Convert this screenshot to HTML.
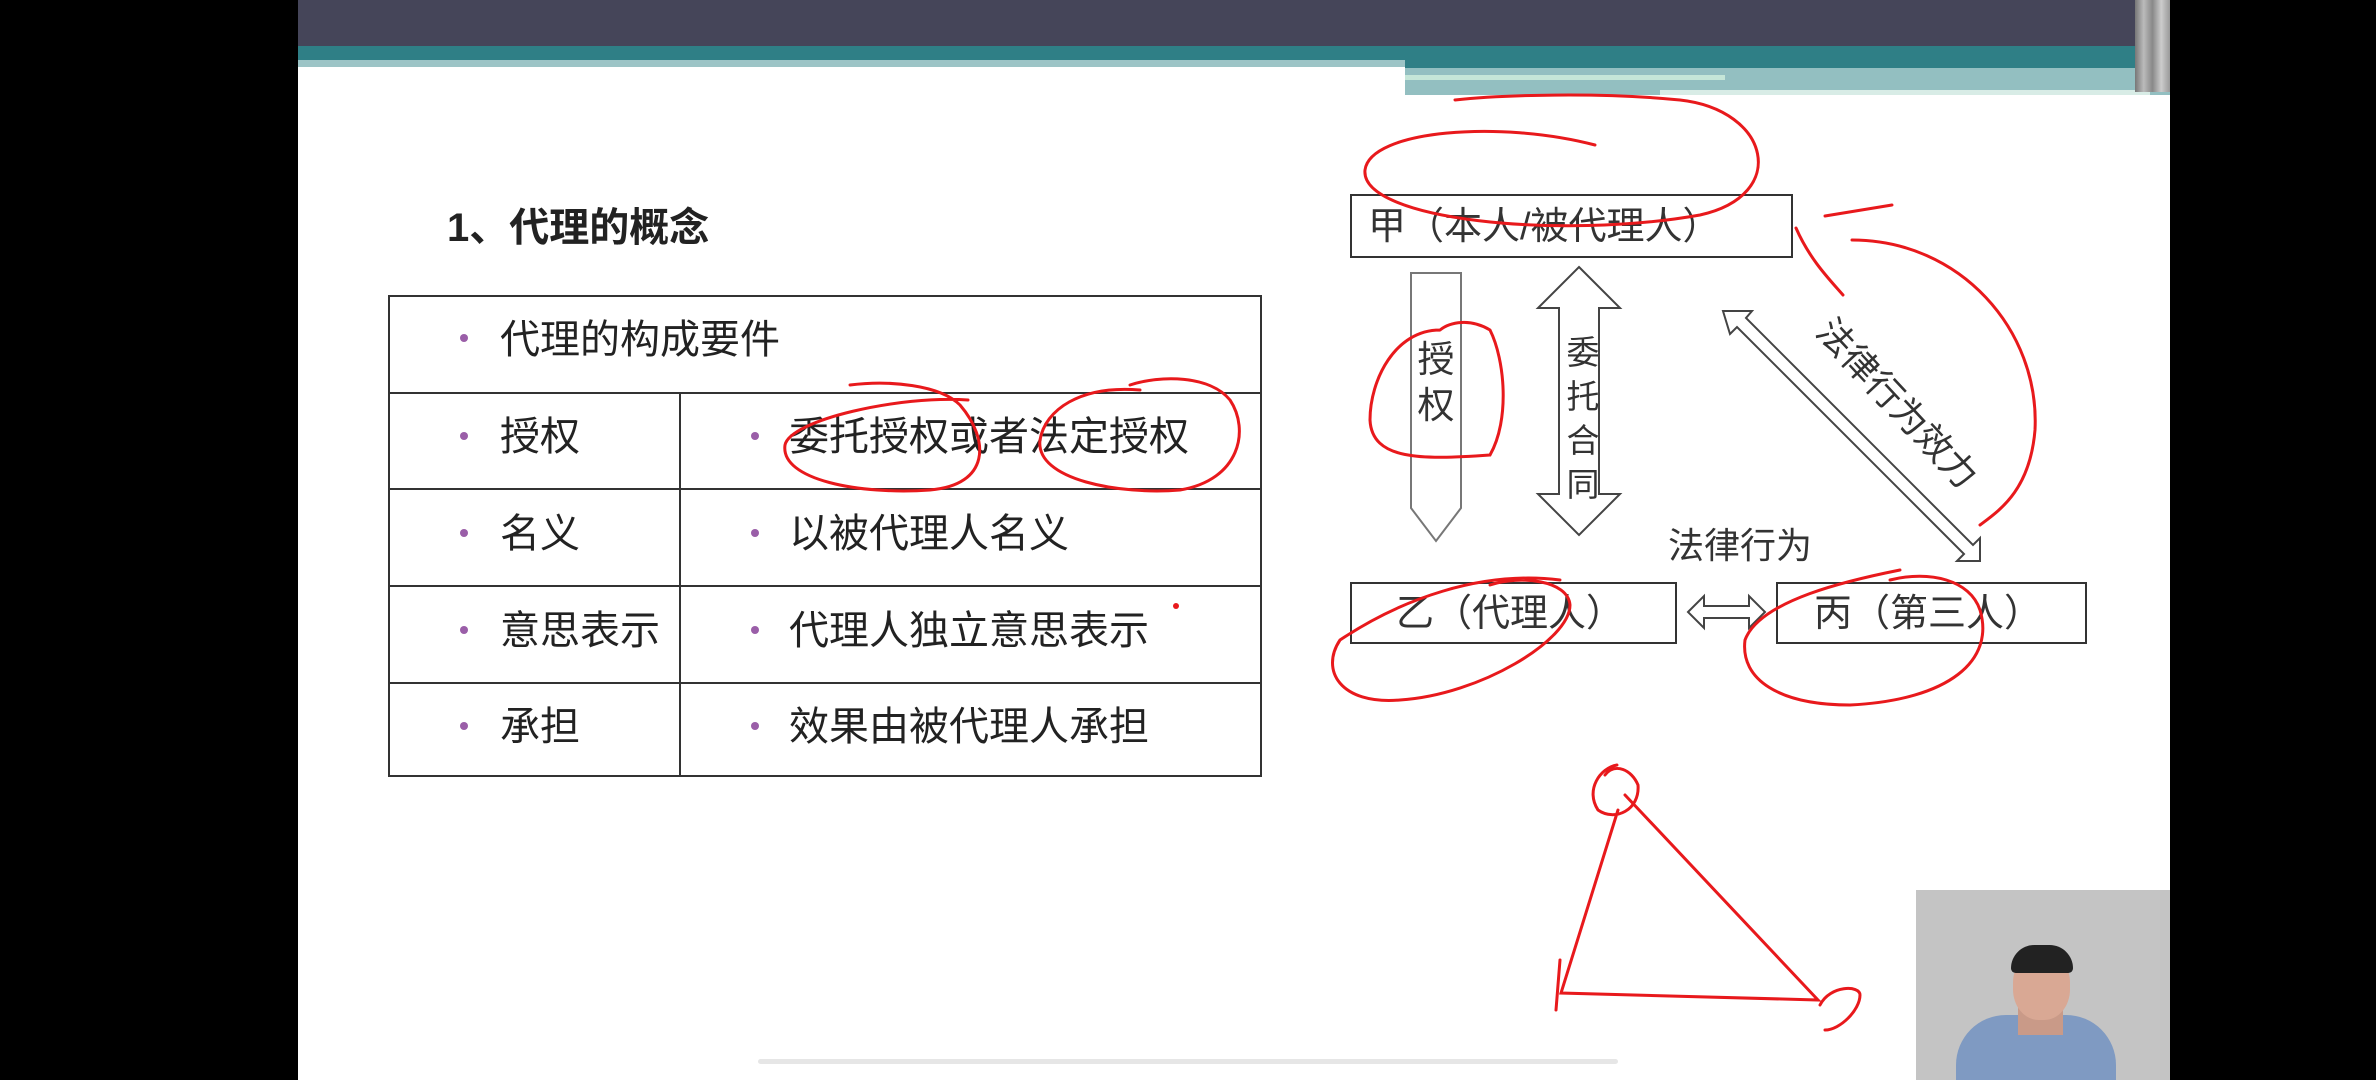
<!DOCTYPE html>
<html><head><meta charset="utf-8"><style>
*{margin:0;padding:0;box-sizing:border-box}
body{width:2376px;height:1080px;background:#000;position:relative;overflow:hidden;font-family:"Liberation Sans","Noto Sans CJK SC",sans-serif;color:#222}
.a{position:absolute}
.slide{left:298px;top:0;width:1872px;height:1080px;background:#fff}
.t{position:absolute;white-space:nowrap}
.cell{font-size:40px;line-height:40px}
.dot{position:absolute;width:8px;height:8px;border-radius:50%;background:#9a5ea8}
.box{position:absolute;border:2px solid #333;background:#fff;font-size:38px;line-height:40px;color:#333;white-space:nowrap}
</style></head><body>
<div class="a slide"></div>
<div class="a" style="left:298px;top:0;width:1872px;height:46px;background:#454559"></div>
<div class="a" style="left:298px;top:46px;width:1872px;height:14px;background:#2f7f86"></div>
<div class="a" style="left:298px;top:60px;width:1107px;height:7px;background:#9cc4c6"></div>
<div class="a" style="left:1405px;top:60px;width:765px;height:8px;background:#2f7f86"></div>
<div class="a" style="left:1405px;top:68px;width:765px;height:27px;background:#93bfc1"></div>
<div class="a" style="left:1405px;top:75px;width:320px;height:5px;background:#c5e6d8"></div>
<div class="a" style="left:1660px;top:90px;width:490px;height:5px;background:#d8ece6"></div>
<div class="a" style="left:2135px;top:0;width:35px;height:92px;background:linear-gradient(90deg,#777,#bbb,#888,#ccc,#999)"></div>

<div class="t" style="left:447px;top:195px;font-size:40px;font-weight:bold;color:#222">1、代理的概念</div>

<!-- table -->
<div class="a" style="left:388px;top:295px;width:874px;height:482px;border:2px solid #333"></div>
<div class="a" style="left:388px;top:392px;width:874px;height:2px;background:#333"></div>
<div class="a" style="left:388px;top:488px;width:874px;height:2px;background:#333"></div>
<div class="a" style="left:388px;top:585px;width:874px;height:2px;background:#333"></div>
<div class="a" style="left:388px;top:682px;width:874px;height:2px;background:#333"></div>
<div class="a" style="left:679px;top:392px;width:2px;height:385px;background:#333"></div>

<div class="dot" style="left:460px;top:334px"></div><div class="t cell" style="left:500px;top:320px">代理的构成要件</div>
<div class="dot" style="left:460px;top:432px"></div><div class="t cell" style="left:500px;top:417px">授权</div>
<div class="dot" style="left:751px;top:432px"></div><div class="t cell" style="left:789px;top:417px">委托授权或者法定授权</div>
<div class="dot" style="left:460px;top:529px"></div><div class="t cell" style="left:500px;top:514px">名义</div>
<div class="dot" style="left:751px;top:529px"></div><div class="t cell" style="left:789px;top:514px">以被代理人名义</div>
<div class="dot" style="left:460px;top:626px"></div><div class="t cell" style="left:500px;top:611px">意思表示</div>
<div class="dot" style="left:751px;top:626px"></div><div class="t cell" style="left:789px;top:611px">代理人独立意思表示</div>
<div class="dot" style="left:460px;top:722px"></div><div class="t cell" style="left:500px;top:707px">承担</div>
<div class="dot" style="left:751px;top:722px"></div><div class="t cell" style="left:789px;top:707px">效果由被代理人承担</div>

<!-- diagram -->
<div class="box" style="left:1350px;top:194px;width:443px;height:64px;padding:11px 0 0 16px">甲（本人/被代理人）</div>
<div class="box" style="left:1350px;top:582px;width:327px;height:62px;padding:10px 0 0 44px">乙（代理人）</div>
<div class="box" style="left:1776px;top:582px;width:311px;height:62px;padding:10px 0 0 36px">丙（第三人）</div>

<svg class="a" style="left:0;top:0" width="2376" height="1080">
<g fill="#fff" stroke="#444" stroke-width="2">
<path d="M1411 273 H1461 V508 L1436 541 L1411 508 Z" stroke="#777"/>
<path d="M1579 267 L1620 308 H1599 V494 H1620 L1579 535 L1538 494 H1559 V308 H1538 Z"/>
<path d="M1723 311 L1752 311 L1746 318 L1973 545 L1980 538 L1980 561 L1957 561 L1964 554 L1737 327 L1730 334 Z"/>
<path d="M1688 612 L1704 596 V606 H1749 V596 L1765 612 L1749 628 V618 H1704 V628 Z"/>
</g>
<g fill="none" stroke="#e8191c" stroke-width="3" stroke-linecap="round">
<path d="M1595 145 C1500 120 1370 130 1365 170 C1360 220 1560 240 1700 215 C1790 195 1770 110 1680 100 C1600 92 1500 95 1455 100"/>
<path d="M1825 216 L1892 205 M1796 228 C1810 260 1830 280 1843 295 M1852 240 C1960 240 2040 330 2035 430 C2030 490 2000 510 1980 525"/>
<path d="M1440 330 C1395 330 1370 380 1370 420 C1372 460 1420 460 1490 455 C1510 420 1505 360 1490 330 C1470 318 1450 322 1440 330"/>
<path d="M968 400 C900 395 790 420 785 445 C780 480 860 495 930 490 C990 485 990 440 960 405 C940 385 890 380 850 385"/>
<path d="M1140 390 C1080 385 1045 410 1040 440 C1035 480 1120 495 1180 490 C1240 480 1250 430 1230 400 C1210 375 1160 375 1130 385"/>
<path d="M1560 580 C1480 570 1400 600 1340 640 C1320 670 1340 705 1400 700 C1480 695 1570 640 1570 605 C1568 580 1520 575 1490 585"/>
<path d="M1900 570 C1850 580 1760 600 1745 640 C1740 680 1780 705 1850 705 C1950 700 1995 660 1980 610 C1970 580 1930 570 1890 580"/>
<path d="M1617 765 C1600 768 1585 790 1598 810 C1615 822 1640 810 1638 785 C1632 770 1615 762 1605 775 M1618 810 L1561 993 L1818 1000 L1625 795 M1560 960 L1556 1010 M1820 1005 C1830 985 1860 985 1860 995 C1860 1010 1840 1030 1825 1030"/>
</g>
<circle cx="1176" cy="606" r="3" fill="#e8191c"/>
<g font-size="37" fill="#333" text-anchor="middle" font-family="Liberation Sans,Noto Sans CJK SC,sans-serif">
<text x="1436" y="372">授</text><text x="1436" y="418">权</text>
</g>
<g font-size="33" fill="#333" text-anchor="middle" font-family="Liberation Sans,Noto Sans CJK SC,sans-serif">
<text x="1583" y="364">委</text><text x="1583" y="408">托</text><text x="1583" y="452">合</text><text x="1583" y="496">同</text>
</g>
<g font-size="36" fill="#333" text-anchor="middle" font-family="Liberation Sans,Noto Sans CJK SC,sans-serif">
<text x="1740" y="558">法律行为</text>
<text x="0" y="0" transform="translate(1888 412) rotate(47)">法律行为效力</text>
</g>
</svg>

<div class="a" style="left:758px;top:1059px;width:860px;height:5px;background:#e6e6e6;border-radius:3px"></div>

<!-- webcam -->
<div class="a" style="left:1916px;top:890px;width:254px;height:190px;background:#c4c4c4;overflow:hidden">
<div class="a" style="left:40px;top:125px;width:160px;height:90px;background:#7f9ac2;border-radius:50px 50px 0 0"></div>
<div class="a" style="left:102px;top:115px;width:45px;height:30px;background:#c99a88"></div>
<div class="a" style="left:97px;top:62px;width:57px;height:68px;background:#d9a894;border-radius:45%"></div>
<div class="a" style="left:95px;top:55px;width:62px;height:28px;background:#222;border-radius:30px 30px 6px 6px"></div>
</div>
</body></html>
